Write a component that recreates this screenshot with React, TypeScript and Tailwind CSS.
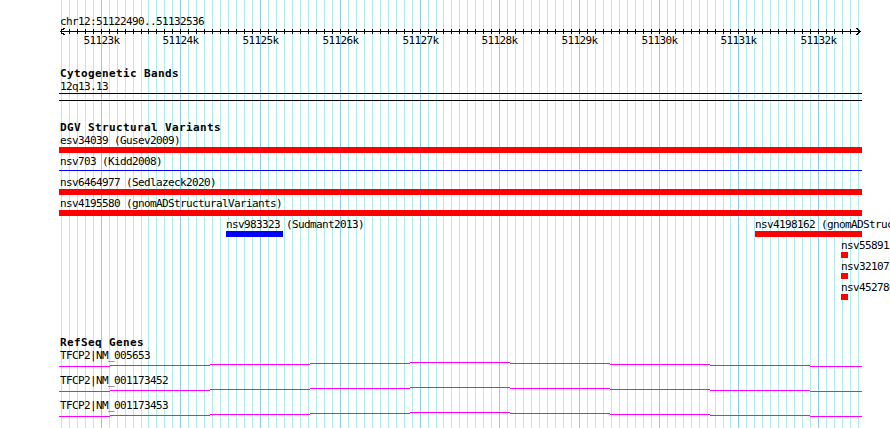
import React from 'react';

// view window
const START = 51122490;
const END = 51132536;
const LEFT = 60; // page x of START
const SCALE = 801 / (END - START + 1);
const px = (bp: number) => LEFT + (bp - START) * SCALE;
const clampX = (x: number) => Math.min(862, Math.max(59, x));

const labelCls =
  "font-['DejaVu_Sans_Mono','Liberation_Mono',monospace] text-[11px] leading-[13px] tracking-[-0.62px] text-black whitespace-nowrap";
const titleCls =
  "font-['DejaVu_Sans_Mono','Liberation_Mono',monospace] font-bold text-[11px] leading-[13px] tracking-[0.38px] text-black whitespace-nowrap pl-[60px]";

const gridLines = Array.from({ length: 101 }, (_, k) => {
  const bp = 51122500 + k * 100;
  return { x: Math.round(px(bp)), major: bp % 1000 === 0, bp };
});

interface Feature {
  start: number;
  end: number;
  name: string;
  color: string;
  thin?: boolean;
}

const dgvRows: Feature[][] = [
  [{ start: 51110000, end: 51140000, name: 'esv34039 (Gusev2009)', color: '#ff0000' }],
  [{ start: 51100000, end: 51150000, name: 'nsv703 (Kidd2008)', color: '#0000ff', thin: true }],
  [{ start: 51105000, end: 51145000, name: 'nsv6464977 (Sedlazeck2020)', color: '#ff0000' }],
  [{ start: 51108000, end: 51142000, name: 'nsv4195580 (gnomADStructuralVariants)', color: '#ff0000' }],
  [
    { start: 51124572, end: 51125287, name: 'nsv983323 (Sudmant2013)', color: '#0000ff' },
    { start: 51131207, end: 51140000, name: 'nsv4198162 (gnomADStructuralVariants)', color: '#ff0000' },
  ],
  [{ start: 51132286, end: 51132374, name: 'nsv5589153 (gnomADStructuralVariants)', color: '#ff0000' }],
  [{ start: 51132286, end: 51132374, name: 'nsv3210731 (gnomADStructuralVariants)', color: '#ff0000' }],
  [{ start: 51132286, end: 51132374, name: 'nsv4527806 (gnomADStructuralVariants)', color: '#ff0000' }],
];

const genes = ['TFCP2|NM_005653', 'TFCP2|NM_001173452', 'TFCP2|NM_001173453'];

// intron hat, drawn as stepped segments [x0, x1, level]
const hat: [number, number, number][] = [
  [59, 110, 4],
  [110, 210, 3],
  [210, 310, 2],
  [310, 410, 1],
  [410, 510, 0],
  [510, 610, 1],
  [610, 710, 2],
  [710, 810, 3],
  [810, 862, 4],
];

const FeatureGlyph: React.FC<{ f: Feature }> = ({ f }) => {
  const x0 = clampX(px(f.start));
  const x1 = clampX(px(f.end));
  const labelX = Math.max(60, x0);
  return (
    <>
      <div className={`absolute top-0 ${labelCls}`} style={{ left: labelX }}>
        {f.name}
      </div>
      {f.thin ? (
        <div className="absolute top-[15px] h-px" style={{ left: x0, width: x1 - x0, backgroundColor: f.color }} />
      ) : (
        <div className="absolute top-[13px] h-[6px]" style={{ left: x0, width: x1 - x0, backgroundColor: f.color }} />
      )}
    </>
  );
};

export default function App() {
  return (
    <div className="relative w-[890px] h-[428px] overflow-hidden bg-white">
      {/* grid */}
      <svg className="absolute left-0 top-0" width={890} height={428}>
        {gridLines.map((g) => (
          <rect key={g.bp} x={g.x} y={0} width={1} height={428} fill={g.major ? '#87cefa' : '#afeeee'} />
        ))}
      </svg>

      <div className="relative">
        {/* ruler */}
        <div className="pt-[15px]">
          <div className={`pl-[60px] ${labelCls}`}>chr12:51122490..51132536</div>
          <svg className="block overflow-visible" width={890} height={6} shapeRendering="crispEdges">
            <rect x={60} y={3} width={801} height={1} fill="#000" />
            {gridLines.map((g) => (
              <rect key={g.bp} x={g.x} y={1} width={1} height={5} fill="#000" />
            ))}
            <polyline points="64.5,0 60.5,3.5 64.5,7" fill="none" stroke="#000" strokeWidth={1} />
            <polyline points="856.5,0 860.5,3.5 856.5,7" fill="none" stroke="#000" strokeWidth={1} />
          </svg>
          <div className="relative h-[13px]">
            {gridLines
              .filter((g) => g.major)
              .map((g) => (
                <div key={g.bp} className={`absolute top-0 -translate-x-1/2 ${labelCls}`} style={{ left: g.x + 0.5 }}>
                  {g.bp / 1000}k
                </div>
              ))}
          </div>
        </div>

        {/* cytogenetic bands */}
        <div className="mt-[20px]">
          <div className={titleCls}>Cytogenetic Bands</div>
          <div className={`pl-[60px] ${labelCls}`}>12q13.13</div>
          <svg className="block" width={890} height={8}>
            <rect x={59} y={0} width={803} height={1} fill="#000" />
            <rect x={59} y={7} width={803} height={1} fill="#000" />
          </svg>
        </div>

        {/* DGV */}
        <div className="mt-[20px]">
          <div className={titleCls}>DGV Structural Variants</div>
          {dgvRows.map((row, i) => (
            <div key={i} className="relative h-[21px]">
              {row.map((f) => (
                <FeatureGlyph key={f.name} f={f} />
              ))}
            </div>
          ))}
        </div>

        {/* RefSeq */}
        <div className="mt-[34px]">
          <div className={titleCls}>RefSeq Genes</div>
          {genes.map((g) => (
            <div key={g} className="relative h-[25px]">
              <div className={`pl-[60px] ${labelCls}`}>{g}</div>
              <svg className="absolute left-0 top-0" width={890} height={25}>
                {hat.map(([a, b, lvl]) => (
                  <rect key={a} x={a} y={13 + lvl} width={b - a} height={1} fill="#ff00ff" />
                ))}
              </svg>
            </div>
          ))}
        </div>
      </div>
    </div>
  );
}
